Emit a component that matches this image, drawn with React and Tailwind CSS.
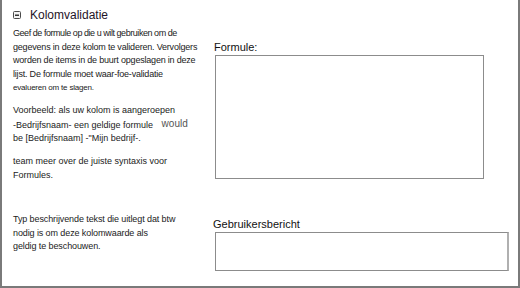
import React from "react";

const CollapseIcon = () => (
  <svg width="8" height="8" viewBox="0 0 8 8" className="shrink-0">
    <rect x="0.5" y="0.5" width="7" height="7" rx="1" fill="#f2f2f2" stroke="#4a4a4a" />
    <rect x="2" y="3.5" width="4" height="1.5" fill="#333" />
  </svg>
);

export default function App() {
  return (
    <div
      className="w-[520px] h-[288px] bg-white border-x-2 border-b-2 border-[#7a7a7a] flex flex-col text-[#222]"
      style={{ fontFamily: '"Liberation Sans", Arial, sans-serif' }}
    >
      {/* Header */}
      <div className="flex items-center gap-[9px] pl-[11px] pt-[8px] h-[22px]">
        <CollapseIcon />
        <span className="text-[12px] leading-[14px] text-[#1f1428]">Kolomvalidatie</span>
      </div>

      <div className="flex flex-1">
        {/* Left description column */}
        <div className="w-[212px] pl-[11px] pt-[5px] text-[9px] leading-[13.5px] whitespace-nowrap">
          <p className="tracking-[-0.2px]">
            <span className="tracking-[-0.45px]">Geef de formule op die u wilt gebruiken om de</span>
            <br />
            gegevens in deze kolom te valideren. Vervolgers
            <br />
            worden de items in de buurt opgeslagen in deze
            <br />
            lijst. De formule moet waar-foe-validatie
            <br />
            <span className="text-[8px]">evalueren om te slagen.</span>
          </p>
          <p className="mt-[9.5px]">
            Voorbeeld: als uw kolom is aangeroepen
            <br />
            -Bedrijfsnaam- een geldige formule{" "}
            <span className="text-[10px] text-[#555] ml-[6px] relative -top-[1px]">would</span>
            <br />
            be [Bedrijfsnaam] -"Mijn bedrijf-.
          </p>
          <p className="mt-[9.5px]">
            team meer over de juiste syntaxis voor
            <br />
            Formules.
          </p>
          <p className="mt-[31px] tracking-[-0.1px]">
            Typ beschrijvende tekst die uitlegt dat btw
            <br />
            nodig is om deze kolomwaarde als
            <br />
            geldig te beschouwen.
          </p>
        </div>

        {/* Right input column */}
        <div className="flex flex-col pt-[18.5px]">
          <label className="text-[11px] leading-[13px] text-[#111]">Formule:</label>
          <div className="mt-[1.5px] ml-[1px] w-[269px] h-[124px] border border-[#8c8c8c] bg-white" />
          <label className="mt-[38.5px] text-[11px] leading-[13px] text-[#111] -ml-[1px]">
            Gebruikersbericht
          </label>
          <div className="mt-[1.5px] ml-[1px] w-[294px] h-[39px] border border-[#8c8c8c] border-r-2 border-r-[#b0b0b0] bg-white" />
        </div>
      </div>
    </div>
  );
}
